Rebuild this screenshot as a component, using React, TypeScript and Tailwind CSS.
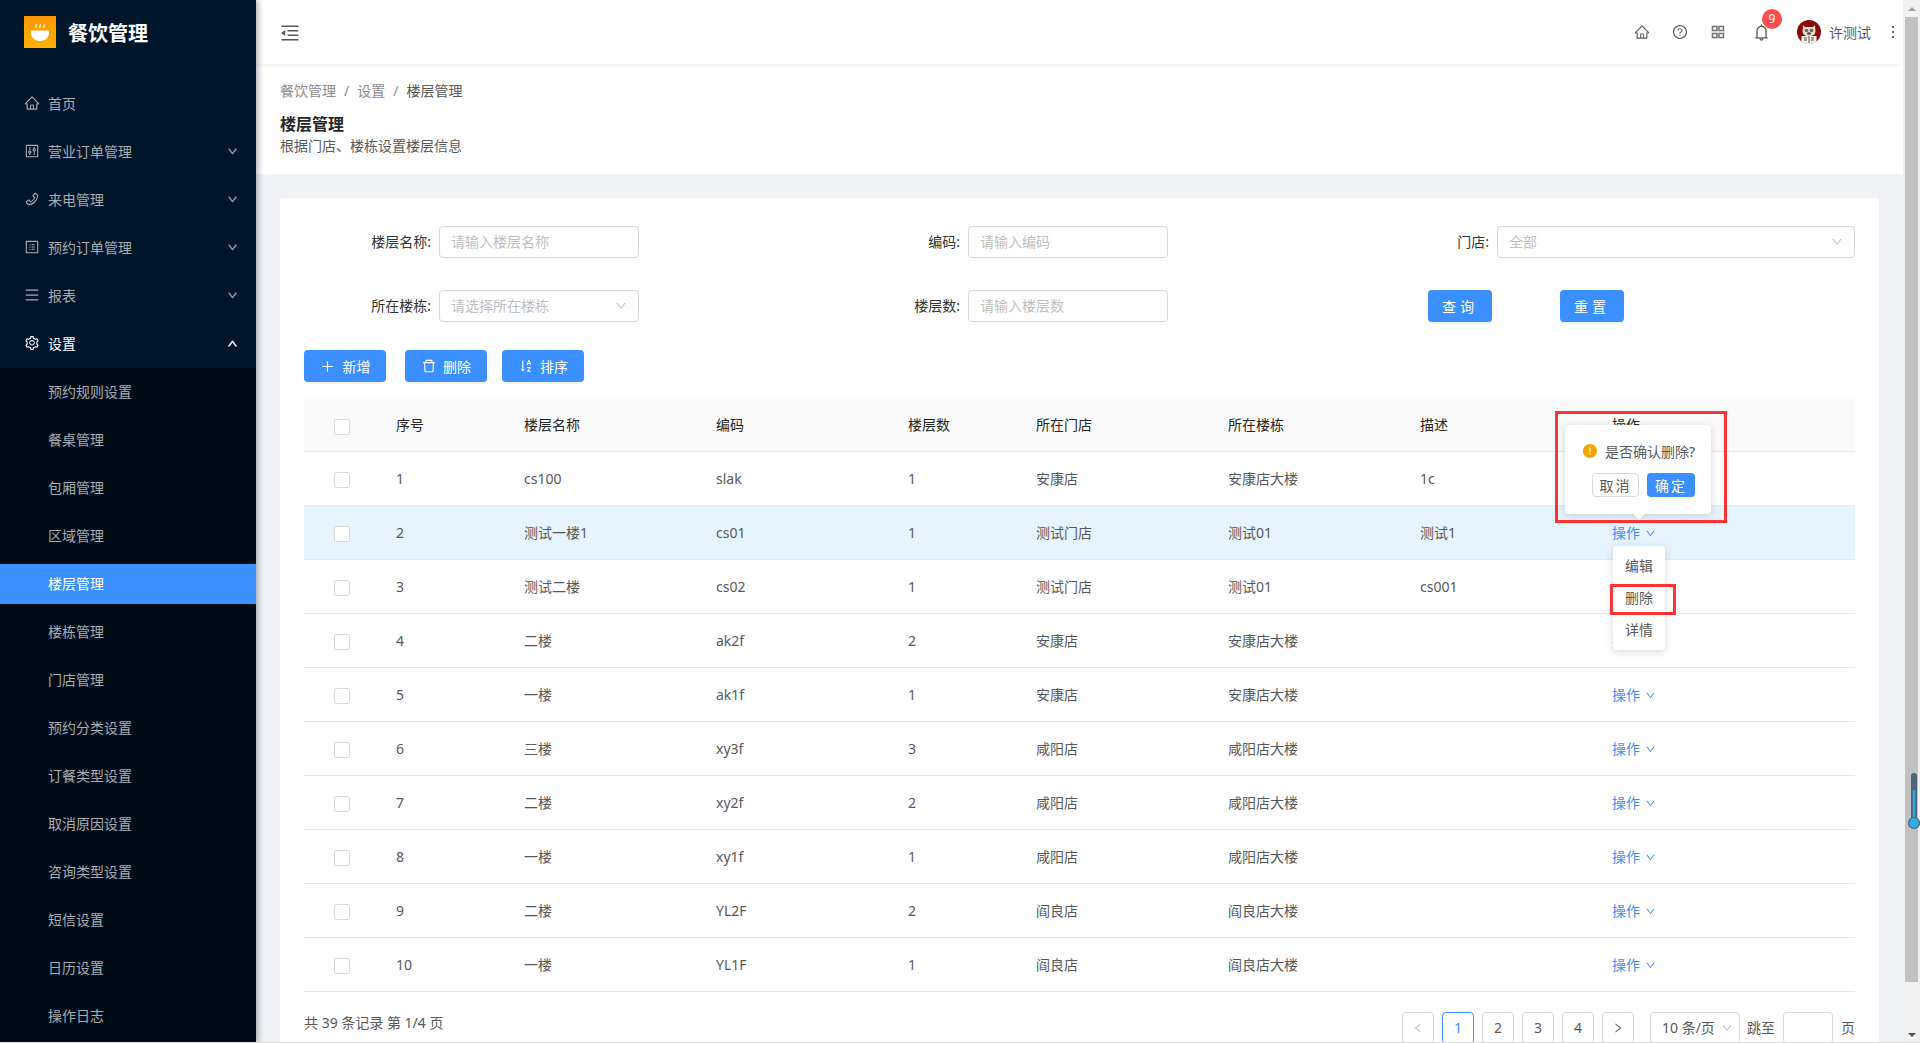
import {
  AiFillExclamationCircle,
  AiOutlineBell,
  AiOutlineControl,
  AiOutlineDelete,
  AiOutlineDown,
  AiOutlineHome,
  AiOutlineLeft,
  AiOutlineMenu,
  AiOutlineMenuFold,
  AiOutlineMore,
  AiOutlinePhone,
  AiOutlinePlus,
  AiOutlineProfile,
  AiOutlineQuestionCircle,
  AiOutlineRight,
  AiOutlineSetting,
  AiOutlineSortAscending,
  AiOutlineUp,
} from "react-icons/ai";

const mainMenu = [
  { label: "首页", icon: AiOutlineHome, arrow: false },
  { label: "营业订单管理", icon: AiOutlineControl, arrow: true },
  { label: "来电管理", icon: AiOutlinePhone, arrow: true },
  { label: "预约订单管理", icon: AiOutlineProfile, arrow: true },
  { label: "报表", icon: AiOutlineMenu, arrow: true },
];

const subMenu = [
  "预约规则设置",
  "餐桌管理",
  "包厢管理",
  "区域管理",
  "楼层管理",
  "楼栋管理",
  "门店管理",
  "预约分类设置",
  "订餐类型设置",
  "取消原因设置",
  "咨询类型设置",
  "短信设置",
  "日历设置",
  "操作日志",
];

const rows = [
  ["1", "cs100", "slak", "1", "安康店", "安康店大楼", "1c"],
  ["2", "测试一楼1", "cs01", "1", "测试门店", "测试01", "测试1"],
  ["3", "测试二楼", "cs02", "1", "测试门店", "测试01", "cs001"],
  ["4", "二楼", "ak2f", "2", "安康店", "安康店大楼", ""],
  ["5", "一楼", "ak1f", "1", "安康店", "安康店大楼", ""],
  ["6", "三楼", "xy3f", "3", "咸阳店", "咸阳店大楼", ""],
  ["7", "二楼", "xy2f", "2", "咸阳店", "咸阳店大楼", ""],
  ["8", "一楼", "xy1f", "1", "咸阳店", "咸阳店大楼", ""],
  ["9", "二楼", "YL2F", "2", "阎良店", "阎良店大楼", ""],
  ["10", "一楼", "YL1F", "1", "阎良店", "阎良店大楼", ""],
];

const headers = ["序号", "楼层名称", "编码", "楼层数", "所在门店", "所在楼栋", "描述", "操作"];

const Checkbox = () => (
  <div className="mx-auto mt-1 h-4 w-4 rounded-[2px] border border-[#d9d9d9] bg-white" />
);

const Logo = () => (
  <svg width="32" height="32" viewBox="0 0 32 32">
    <defs>
      <linearGradient id="logoBg" x1="0" y1="0" x2="0" y2="1">
        <stop offset="0" stopColor="#ff9500" />
        <stop offset="1" stopColor="#fdb400" />
      </linearGradient>
    </defs>
    <rect width="32" height="32" fill="url(#logoBg)" />
    <path d="M7 14.500h18v2.500c0 4-3 7-6.500 7.500v.5h-5v-.5C10 24 7 21 7 17z" fill="#fff" />
    <path
      d="M12 12c-1-1.500 1-2 0-4M16 12c-1-1.500 1-2 0-4M20 12c-1-1.500 1-2 0-4"
      stroke="#fff"
      strokeWidth="1.200"
      fill="none"
    />
  </svg>
);

const Avatar = () => (
  <svg width="24" height="24" viewBox="0 0 24 24">
    <circle cx="12" cy="12" r="12" fill="#8c0a0a" />
    <path d="M6 5l2 2h8l2-2 .5 6c0 3-2 5-6.500 5S5.500 14 5.500 11z" fill="#e8dccb" />
    <circle cx="9.500" cy="10.500" r="1.800" fill="#6d6a66" />
    <circle cx="14.500" cy="10.500" r="1.800" fill="#6d6a66" />
    <ellipse cx="12" cy="13.500" rx="2" ry="1.200" fill="#4a4542" />
    <path d="M4.500 16h15v5.500a12 12 0 0 1-15 0z" fill="#f3f0ea" />
    <path d="M12 16v7M7 18h3M14 18h3M7 20h3M14 20h3" stroke="#3a3a3a" strokeWidth=".9" />
  </svg>
);

const GridIcon = () => (
  <svg width="14" height="14" viewBox="0 0 14 14" fill="none" stroke="#777" strokeWidth="1.600">
    <rect x="1.500" y="1.500" width="4.500" height="4" />
    <rect x="8" y="1.500" width="4.500" height="4" />
    <rect x="1.500" y="8.500" width="4.500" height="4" />
    <rect x="8" y="8.500" width="4.500" height="4" />
  </svg>
);

const Sidebar = () => (
  <aside className="z-20 flex h-full w-[256px] shrink-0 flex-col overflow-hidden bg-[#001529] shadow-[2px_0_6px_rgba(0,21,41,0.35)]">
    <div className="flex h-16 shrink-0 items-center pl-6">
      <Logo />
      <span className="mt-[3px] ml-[12px] text-[20px] leading-8 font-bold text-white">餐饮管理</span>
    </div>
    <nav className="pt-[20px]">
      {mainMenu.map((item) => (
        <div key={item.label} className="mb-2 flex h-10 items-center pr-[18px] pb-[2px] pl-6 text-[14px] text-[#a6adb4]">
          <item.icon className="mr-2 text-[16px]" />
          <span>{item.label}</span>
          {item.arrow && <AiOutlineDown className="ml-auto text-[11px] stroke-[40]" />}
        </div>
      ))}
      <div className="mb-1 flex h-10 items-center pr-[18px] pb-[2px] pl-6 text-[14px] text-white">
        <AiOutlineSetting className="mr-2 text-[16px]" />
        <span>设置</span>
        <AiOutlineUp className="ml-auto text-[11px] stroke-[60]" />
      </div>
      <div className="bg-[#000c17] pt-1 pb-10">
        {subMenu.map((label) => (
          <div
            key={label}
            className={
              label === "楼层管理"
                ? "mb-2 flex h-10 items-center bg-[#3c8fff] pb-[2px] pl-12 text-[14px] text-white"
                : "mb-2 flex h-10 items-center pb-[2px] pl-12 text-[14px] text-[#a6adb4]"
            }
          >
            {label}
          </div>
        ))}
      </div>
    </nav>
  </aside>
);

const Header = () => (
  <header className="z-10 flex h-16 shrink-0 items-center bg-white pr-px pl-6 shadow-[0_1px_4px_rgba(0,21,41,0.08)]">
    <AiOutlineMenuFold className="mt-px ml-[-1px] text-[22px] text-[#595959]" />
    <div className="ml-auto flex items-center text-[#595959]">
      <AiOutlineHome className="text-[16px]" />
      <AiOutlineQuestionCircle className="ml-[22px] text-[16px]" />
      <span className="ml-[23px]">
        <GridIcon />
      </span>
      <span className="relative ml-[27px]">
        <AiOutlineBell className="text-[19px]" />
        <span className="absolute top-[-14px] left-[10px] flex h-5 w-5 items-center justify-center rounded-full bg-[#ff4d4f] text-[12px] text-white">
          9
        </span>
      </span>
      <span className="ml-[26px]">
        <Avatar />
      </span>
      <span className="ml-2 text-[14px]">许测试</span>
      <AiOutlineMore className="ml-[13px] text-[18px] text-[#333]" />
    </div>
  </header>
);

const PageHeader = () => (
  <div className="h-[110px] shrink-0 bg-white px-6 pt-4">
    <div className="flex h-[22px] items-center text-[14px] leading-[22px] text-[#8c8c8c]">
      <span>餐饮管理</span>
      <span className="mx-2">/</span>
      <span>设置</span>
      <span className="mx-2">/</span>
      <span className="text-[#595959]">楼层管理</span>
    </div>
    <div className="mt-[11px] h-[22px] text-[16px] leading-[22px] font-semibold text-[#262626]">楼层管理</div>
    <div className="h-[22px] text-[14px] leading-[22px] text-[#595959]">根据门店、楼栋设置楼层信息</div>
  </div>
);

const FormLabel = ({ text }: { text: string }) => (
  <label className="mr-2 mb-px w-[127px] shrink-0 text-right text-[14px] text-[#333]">{text}:</label>
);

const TextInput = ({ placeholder, className }: { placeholder: string; className: string }) => (
  <input
    placeholder={placeholder}
    className={`h-8 rounded border border-[#d9d9d9] bg-white px-[11px] pb-px text-[14px] outline-none placeholder:text-[#bfbfbf] ${className}`}
  />
);

const SelectBox = ({ text, className }: { text: string; className: string }) => (
  <div className={`flex h-8 items-center rounded border border-[#d9d9d9] bg-white px-[11px] pb-px text-[14px] text-[#bfbfbf] ${className}`}>
    <span>{text}</span>
    <AiOutlineDown className="ml-auto text-[12px]" />
  </div>
);

const SearchForm = () => (
  <div className="grid grid-cols-[529px_529px_1fr] gap-y-8">
    <div className="flex items-center">
      <FormLabel text="楼层名称" />
      <TextInput placeholder="请输入楼层名称" className="w-[200px]" />
    </div>
    <div className="flex items-center">
      <FormLabel text="编码" />
      <TextInput placeholder="请输入编码" className="w-[200px]" />
    </div>
    <div className="flex items-center">
      <FormLabel text="门店" />
      <SelectBox text="全部" className="w-[358px]" />
    </div>
    <div className="flex items-center">
      <FormLabel text="所在楼栋" />
      <SelectBox text="请选择所在楼栋" className="w-[200px]" />
    </div>
    <div className="flex items-center">
      <FormLabel text="楼层数" />
      <TextInput placeholder="请输入楼层数" className="w-[200px]" />
    </div>
    <div className="flex items-center gap-[68px] pl-[66px]">
      <button className="h-8 w-16 rounded bg-[#3c8fff] text-[14px] tracking-[4px] text-white shadow-[0_2px_0_rgba(0,0,0,0.045)]">查询</button>
      <button className="h-8 w-16 rounded bg-[#3c8fff] text-[14px] tracking-[4px] text-white shadow-[0_2px_0_rgba(0,0,0,0.045)]">重置</button>
    </div>
  </div>
);

const Toolbar = () => (
  <div className="mt-[28px] flex text-[14px] text-white">
    <button className="flex h-8 w-[82px] items-center justify-center gap-2 rounded bg-[#3c8fff] shadow-[0_2px_0_rgba(0,0,0,0.045)]">
      <AiOutlinePlus className="text-[15px]" />
      新增
    </button>
    <button className="ml-[19px] flex h-8 w-[82px] items-center justify-center gap-[6px] rounded bg-[#3c8fff] shadow-[0_2px_0_rgba(0,0,0,0.045)]">
      <AiOutlineDelete className="text-[16px]" />
      删除
    </button>
    <button className="ml-[15px] flex h-8 w-[82px] items-center justify-center gap-[6px] rounded bg-[#3c8fff] shadow-[0_2px_0_rgba(0,0,0,0.045)]">
      <AiOutlineSortAscending className="text-[16px]" />
      排序
    </button>
  </div>
);

const Overlays = () => (
  <>
    <div className="absolute top-[26px] left-[1261px] z-10 h-[89px] w-[146px] rounded bg-white pt-[19px] pr-4 pl-[17px] shadow-[0_2px_8px_rgba(0,0,0,0.15)]">
      <div className="flex h-[14px] items-center text-[14px] text-[#595959]">
        <AiFillExclamationCircle className="mr-[7px] shrink-0 text-[16px] text-[#f0a800]" />
        <span className="whitespace-nowrap">是否确认删除?</span>
      </div>
      <div className="mt-[15px] flex justify-end gap-2">
        <button className="h-6 w-[47px] rounded border border-[#d9d9d9] bg-white text-[14px] tracking-[2px] text-[#595959]">取消</button>
        <button className="h-6 w-[48px] rounded bg-[#3c8fff] text-[14px] tracking-[2px] text-white">确定</button>
      </div>
      <div className="absolute bottom-[-4px] left-[70px] h-2 w-2 rotate-45 bg-white" />
    </div>
    <div className="absolute top-[12px] left-[1251px] z-20 h-[112px] w-[172px] border-[3px] border-[#ff3333]" />
    <div className="absolute top-[147px] left-[1309px] z-10 w-[52px] rounded bg-white py-1 text-center text-[14px] text-[#595959] shadow-[0_2px_8px_rgba(0,0,0,0.15)]">
      <div className="h-8 leading-8">编辑</div>
      <div className="h-8 leading-8">删除</div>
      <div className="h-8 leading-8">详情</div>
    </div>
    <div className="absolute top-[185px] left-[1306px] z-20 h-[31px] w-[66px] border-[3px] border-[#ff3333]" />
  </>
);

const DataTable = () => (
  <div className="relative mt-[17px]">
    <table className="w-full table-fixed text-[14px] text-[#595959]">
      <colgroup>
        <col className="w-[76px]" />
        <col className="w-[128px]" />
        <col className="w-[192px]" />
        <col className="w-[192px]" />
        <col className="w-[128px]" />
        <col className="w-[192px]" />
        <col className="w-[192px]" />
        <col className="w-[192px]" />
        <col />
      </colgroup>
      <thead>
        <tr className="h-[52px] bg-[#fafafa]">
          <th className="border-b border-[#e8e8e8]">
            <Checkbox />
          </th>
          {headers.map((h) => (
            <th key={h} className="border-b border-[#e8e8e8] pl-4 text-left font-normal text-[#262626]">
              {h}
            </th>
          ))}
        </tr>
      </thead>
      <tbody>
        {rows.map((row) => (
          <tr key={row[0]} className={row[0] === "2" ? "h-[54px] bg-[#e6f4ff]" : "h-[54px]"}>
            <td className="border-b border-[#e8e8e8]">
              <Checkbox />
            </td>
            {row.map((cell, i) => (
              <td key={i} className="border-b border-[#e8e8e8] pl-4">
                {cell}
              </td>
            ))}
            <td className="border-b border-[#e8e8e8] pl-4 text-[#3c8fff]">
              <span className="inline-flex items-center gap-[5px]">
                操作
                <AiOutlineDown className="mt-[2px] text-[11px]" />
              </span>
            </td>
          </tr>
        ))}
      </tbody>
    </table>
    <Overlays />
  </div>
);

const PageItem = ({ children, active, muted }: { children: React.ReactNode; active?: boolean; muted?: boolean }) => (
  <div
    className={
      active
        ? "flex h-8 w-8 items-center justify-center rounded border border-[#3c8fff] text-[#3c8fff]"
        : muted
          ? "flex h-8 w-8 items-center justify-center rounded border border-[#d9d9d9] text-[#bfbfbf]"
          : "flex h-8 w-8 items-center justify-center rounded border border-[#d9d9d9] text-[#595959]"
    }
  >
    {children}
  </div>
);

const Pagination = () => (
  <div className="mt-[20px] flex items-start text-[14px] text-[#595959]">
    <span className="leading-[22px]">共 39 条记录 第 1/4 页</span>
    <div className="ml-auto flex items-center">
      <div className="flex gap-2">
        <PageItem muted>
          <AiOutlineLeft className="text-[12px]" />
        </PageItem>
        <PageItem active>1</PageItem>
        <PageItem>2</PageItem>
        <PageItem>3</PageItem>
        <PageItem>4</PageItem>
        <PageItem>
          <AiOutlineRight className="text-[12px]" />
        </PageItem>
      </div>
      <div className="ml-4 flex h-8 w-[90px] items-center rounded border border-[#d9d9d9] pr-[6px] pl-[11px]">
        <span className="whitespace-nowrap">10 条/页</span>
        <AiOutlineDown className="ml-auto text-[12px] text-[#bfbfbf]" />
      </div>
      <span className="ml-[7px]">跳至</span>
      <div className="mx-2 h-8 w-[50px] rounded border border-[#d9d9d9]" />
      <span>页</span>
    </div>
  </div>
);

const Scrollbar = () => (
  <div className="relative flex h-full w-[17px] shrink-0 flex-col bg-[#f1f1f1]">
    <div className="flex h-[17px] items-center justify-center">
      <div className="h-0 w-0 border-x-[4px] border-b-[4px] border-x-transparent border-b-[#a3a3a3]" />
    </div>
    <div className="ml-[2px] h-[965px] w-[13px] bg-[#c1c1c1]" />
    <div className="mt-auto flex h-[17px] items-center justify-center">
      <div className="h-0 w-0 border-x-[4px] border-t-[4px] border-x-transparent border-t-[#505050]" />
    </div>
    <svg className="absolute top-[770px] right-0" width="12" height="62" viewBox="0 0 12 62">
      <rect x="3" y="3" width="6" height="50" rx="3" fill="#4f6676" />
      <rect x="4.800" y="20" width="2.400" height="34" fill="#2fa8e0" />
      <circle cx="6" cy="53" r="5.500" fill="#35ace0" stroke="#4f6676" strokeWidth="1.200" />
    </svg>
  </div>
);

export default function App() {
  return (
    <div className="relative flex h-[1043px] w-[1920px] overflow-hidden bg-[#f0f2f5] font-['Noto_Sans','Noto_Sans_CJK_SC',sans-serif]">
      <Sidebar />
      <main className="flex h-full min-w-0 flex-1 flex-col overflow-hidden">
        <Header />
        <PageHeader />
        <div className="px-6 pt-6">
          <div className="bg-white px-6 pt-[28px] pb-6">
            <SearchForm />
            <Toolbar />
            <DataTable />
            <Pagination />
          </div>
        </div>
      </main>
      <Scrollbar />
      <div className="absolute right-0 bottom-0 left-0 z-30 h-px bg-[#dcdcdc]" />
    </div>
  );
}
